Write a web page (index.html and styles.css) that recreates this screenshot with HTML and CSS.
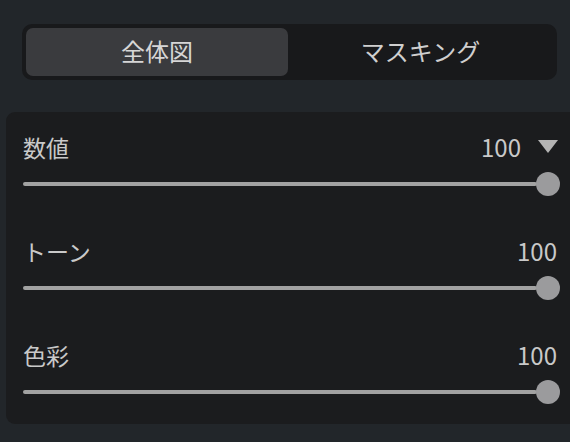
FILE: index.html
```html
<!DOCTYPE html>
<html lang="ja">
<head>
<meta charset="utf-8">
<link rel="stylesheet" href="styles.css">
</head>
<body>
<div class="app">
  <div class="segmented">
    <div class="seg seg-active">全体図</div>
    <div class="seg">マスキング</div>
  </div>
  <div class="panel">
    <div class="row">
      <div class="row-head">
        <span class="label">数値</span>
        <span class="value-group">
          <span class="value">100</span>
          <svg class="caret" width="20" height="13" viewBox="0 0 20 13"><polygon points="0,0 20,0 10,13" fill="#b4b4b4"/></svg>
        </span>
      </div>
      <div class="slider"><div class="track"></div><div class="thumb"></div></div>
    </div>
    <div class="row">
      <div class="row-head">
        <span class="label">トーン</span>
        <span class="value">100</span>
      </div>
      <div class="slider"><div class="track"></div><div class="thumb"></div></div>
    </div>
    <div class="row">
      <div class="row-head">
        <span class="label">色彩</span>
        <span class="value">100</span>
      </div>
      <div class="slider"><div class="track"></div><div class="thumb"></div></div>
    </div>
  </div>
</div>
</body>
</html>
```
FILE: styles.css
```css
html, body {
  margin: 0;
  padding: 0;
  background: #22262a;
  overflow: hidden;
}
body {
  width: 570px;
  height: 442px;
  font-family: "Noto Sans CJK JP", "Noto Sans", sans-serif;
}
.app {
  padding-top: 24px;
}
.segmented {
  margin-left: 22px;
  width: 527px;
  height: 48px;
  padding: 4px;
  background: #18191b;
  border-radius: 10px;
  display: grid;
  grid-template-columns: 262px 1fr;
}
.seg {
  display: flex;
  align-items: center;
  justify-content: center;
  font-size: 24px;
  color: #cfcfcf;
  border-radius: 7px;
  line-height: 1;
  padding-bottom: 2px;
}
.seg-active {
  background: #3a3b3e;
  color: #d6d6d6;
}
.panel {
  margin-top: 32px;
  margin-left: 6px;
  width: 564px;
  box-sizing: border-box;
  background: #1b1c1e;
  border-radius: 9px 0 0 9px;
  padding: 21px 0 20px 17px;
  display: flex;
  flex-direction: column;
  gap: 41px;
}
.row {
  width: 537px;
  display: flex;
  flex-direction: column;
  gap: 7px;
}
.row-head {
  height: 32px;
  box-sizing: border-box;
  display: flex;
  align-items: center;
  justify-content: space-between;
  padding: 0 3px 4px 0;
}
.label {
  font-size: 23px;
  color: #c9c9c9;
  line-height: 1;
}
.value {
  font-size: 24px;
  color: #c9c9c9;
  line-height: 1;
}
.value-group {
  display: flex;
  align-items: center;
  gap: 17px;
  margin-right: -1px;
}
.caret {
  display: block;
  margin-top: -2px;
}
.slider {
  height: 24px;
  display: flex;
  align-items: center;
}
.track {
  flex: 1;
  height: 4px;
  background: #a2a2a2;
  border-radius: 2px;
  margin-right: -1px;
}
.thumb {
  width: 24px;
  height: 24px;
  border-radius: 50%;
  background: #9b9b9d;
}
```
